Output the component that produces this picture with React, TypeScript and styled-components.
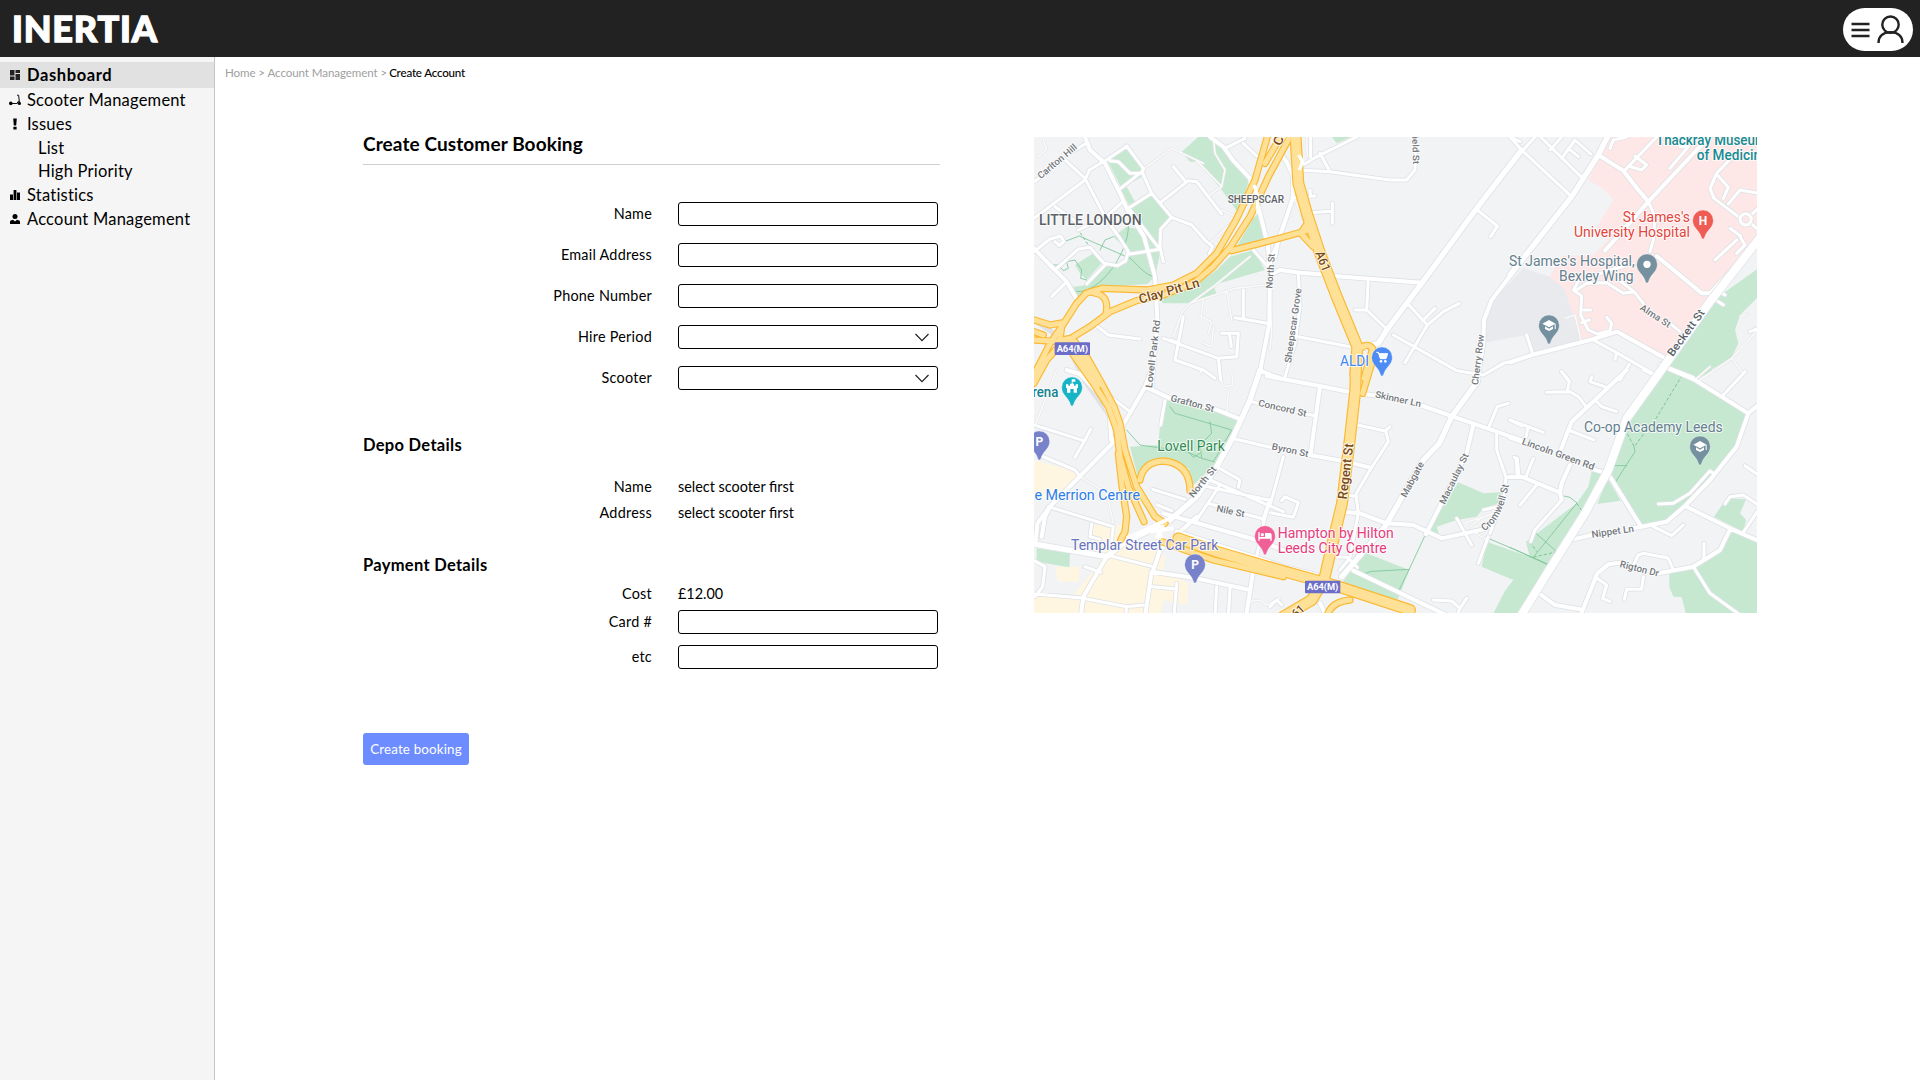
import React from "react";
import styled, { createGlobalStyle } from "styled-components";

const GlobalStyle = createGlobalStyle`
  * { box-sizing: border-box; }
  body { margin: 0; background: #fff; color: #000; font-family: Lato, "Open Sans", sans-serif; }
`;

const Page = styled.div`
  display: flex;
  flex-direction: column;
  height: 1080px;
  overflow: hidden;
`;
const TopBar = styled.header`
  display: flex;
  justify-content: space-between;
  align-items: center;
  flex: 0 0 57px;
  padding: 0 7px 0 12px;
  background: #222;
`;
const Logo = styled.div`
  margin-top: -2px;
  color: #fff;
  font-size: 36px;
  line-height: 40px;
  font-weight: 900;
  letter-spacing: 0.8px;
  -webkit-text-stroke: 1.3px #fff;
`;
const UserPill = styled.button`
  display: flex;
  align-items: center;
  width: 70px;
  height: 43px;
  margin-top: 2px;
  padding: 0;
  border: 0;
  border-radius: 22px;
  background: #fff;
`;
const Body = styled.div`
  display: flex;
  flex: 1;
`;
const Sidebar = styled.nav`
  flex: 0 0 215px;
  padding-top: 5px;
  background: #f5f5f5;
  border-right: 1px solid #c4c4c4;
`;
const NavItem = styled.div<{ $active?: boolean; $height: number; $nested?: boolean }>`
  display: flex;
  align-items: center;
  height: ${(p) => p.$height}px;
  padding: 0 0 1px ${(p) => (p.$nested ? 38 : 9)}px;
  gap: 6px;
  font-size: 16.5px;
  white-space: nowrap;
  letter-spacing: ${(p) => (p.$active ? 0.6 : 0.22)}px;
  font-weight: ${(p) => (p.$active ? 700 : 400)};
  background: ${(p) => (p.$active ? "#e1e1e1" : "transparent")};
`;
const Main = styled.main`
  flex: 1;
`;
const Breadcrumb = styled.div`
  display: flex;
  gap: 2px;
  padding: 8px 0 0 10px;
  font-size: 11.6px;
  line-height: 16px;
  color: #a0a0a0;
  letter-spacing: -0.05px;
`;
const Crumb = styled.span<{ $current?: boolean }>`
  color: ${(p) => (p.$current ? "#000" : "inherit")};
  font-weight: ${(p) => (p.$current ? 500 : 400)};
  letter-spacing: ${(p) => (p.$current ? -0.2 : -0.1)}px;
`;
const Content = styled.div`
  display: flex;
  align-items: flex-start;
  padding: 56px 0 0 148px;
  gap: 94px;
`;
const Form = styled.form`
  width: 577px;
`;
const Title = styled.h1`
  margin: 0 0 37px;
  height: 28px;
  border-bottom: 1px solid #cfcfcf;
  font-size: 19px;
  line-height: 13px;
  font-weight: 700;
  letter-spacing: 0.1px;
`;
const Section = styled.h2<{ $top: number; $bottom: number }>`
  margin: ${(p) => p.$top}px 0 ${(p) => p.$bottom}px;
  font-size: 16.5px;
  line-height: 20px;
  font-weight: 700;
  letter-spacing: 0.3px;
`;
const Fields = styled.div<{ $gap: number }>`
  display: grid;
  gap: ${(p) => p.$gap}px;
`;
const Field = styled.div<{ $height?: number }>`
  display: grid;
  grid-template-columns: 289px 260px;
  column-gap: 26px;
  align-items: center;
  height: ${(p) => p.$height ?? 24}px;
  font-size: 14.4px;
`;
const Label = styled.label`
  padding-bottom: 1px;
  text-align: right;
  white-space: nowrap;
  letter-spacing: 0.25px;
`;
const Value = styled.span`
  padding-bottom: 1px;
`;
const Input = styled.div`
  display: flex;
  align-items: center;
  justify-content: flex-end;
  height: 24px;
  padding-right: 8px;
  border: 1px solid #000;
  border-radius: 3px;
  background: #fff;
`;
const Submit = styled.button`
  display: block;
  width: 106px;
  height: 32px;
  margin-top: 64px;
  padding: 0 0 1px;
  border: 0;
  border-radius: 3px;
  background: #6c8cff;
  color: #fff;
  font: 400 13.4px Lato, sans-serif;
  letter-spacing: 0.15px;
  white-space: nowrap;
`;
const MapView = styled.svg`
  display: block;
  width: 723px;
  height: 476px;
`;

/* ---------- map data: one entry per map tile, each tile spans 720 units ---------- */

type Label = [text: string, x: number, y: number, w: number, size: number, angle: number, fill: string, weight?: number];
interface Tile {
  at: [number, number];
  pink?: string;
  grey?: string;
  cream?: string;
  park?: string;
  path?: string;
  dash?: string;
  thin?: string;
  minor?: string;
  mid?: string;
  wide?: string;
  yellow?: string;
  yellowWide?: string;
  labels: Label[];
}

const ST = "#74787c";
const BROWN = "#7b4a14";
const SLATE = "#64808f";

const tiles: Tile[] = [
  {
    at: [0, 0],
    park:
      "M232 92L295 45L345 118L335 140L275 175ZM272 178L290 170L315 215L365 190L420 262L390 300L385 345L390 370L375 440L352 462L180 475L140 505L130 470L170 465L230 405L290 400L300 365L250 320L290 290L335 300L310 250ZM135 405L190 370L215 400L170 450L150 430ZM455 65L505 21L545 21L600 85L658 150L640 205L620 242L575 180L505 95L480 95ZM670 265L685 250L712 340L615 358ZM600 380L670 360L705 420L550 465L560 492L480 520L400 520L370 500L490 470L560 420ZM905 20L965 20L920 40Z",
    path:
      "M70 405L85 405L100 422L115 415L110 395L135 390L155 420L152 445L170 450M295 290C295 370 210 490 140 485M108 333L148 318L300 385C320 400 340 430 365 438M210 360L225 330L250 320",
    dash: "M115 255L175 345",
    thin:
      "M340 118L425 55L520 100M500 92L575 170L540 195M550 21L555 70L585 120L575 170M540 340L622 262M575 240L620 262M660 380L550 470L480 520L455 550L430 620M480 520L615 475L710 465M590 480L605 570M520 510L513 560L545 575L535 610M550 590L545 650L520 640M22 80L50 60L38 22",
    minor:
      "M12 155L60 122M115 72L165 42M100 85L165 145L230 270L270 325L295 365L287 392L262 407L222 400L180 352L145 357L75 420M12 265L165 150L178 120L225 92L292 48M75 230L145 280M145 300L230 260L278 215M12 365L60 327L92 318L102 335L88 347L75 335M228 402L170 462M105 460L65 500M240 92L265 95L300 130L335 130L340 115L290 48M340 122L272 175M338 130L365 190L425 262M295 235L365 190M425 262L392 298L390 350L400 395M300 240L345 300L385 352M300 372L390 358M395 215L475 152L500 155L575 252M465 152L430 110M425 262L485 285L530 335L548 350L538 370M585 55L645 25M640 40L680 78M670 360L712 408L745 335M190 580L235 615L330 627M400 625L565 685L620 680L625 610L575 610M598 610L604 650M460 560L435 690L520 720L555 745M450 640L420 630M565 685L572 750M640 480L640 568M615 563L712 580M690 720L750 745",
    mid: "M165 21L180 60L225 100L275 200L292 240L342 320L375 440L382 570L365 765M540 21L580 50L610 92L660 145L665 180M12 355L45 390L110 455L142 510M680 210L700 290L712 340L720 400L718 580L690 725",
    yellow:
      "M715 10L675 150L618 270L560 370L500 430L430 465L350 480L215 475L168 490L140 520L95 590L60 640L12 735M780 20L715 140L660 260L602 350L550 410L490 460L400 495L320 512L240 545L180 590L90 645L50 690L12 760M190 488Q240 495 228 550M605 362L710 335L830 302M12 570L60 585L100 578M12 605L40 615M12 630L75 634L120 625M95 590L88 640",
    yellowWide: "M130 640L158 690L200 760",
    labels: [
      ["LITTLE LONDON", 27, 285, 308, 42, 0, "#5c6267", 500],
      ["SHEEPSCAR", 593, 219, 169, 32, 0, "#5c6267", 500],
      ["Carlton Hill", 32, 148, 145, 28, -40, ST],
      ["Clay Pit Ln", 331, 521, 187, 39, -16, BROWN, 500],
      ["North St", 727, 476, 105, 28, -86, ST],
      ["Lovell Park Rd", 366, 775, 205, 28, -83, ST],
    ],
  },
  {
    at: [720, 0],
    thin: "M0 500L5 600L0 660M75 210L105 280M110 21L112 80",
    minor:
      "M90 110L135 83L260 21M150 70L180 125M122 21L122 80M85 120L180 125L360 150L410 150L435 120L437 21M75 203L135 198M120 180L122 200M118 248L187 244M187 220L187 280M85 430L90 530L75 640L45 740M85 620L240 650M295 445L290 540L255 540M290 540L350 597M622 240L682 288L662 320M412 520L472 585M458 572L495 535M568 520L520 545L472 585L405 698M370 615L560 722L640 735L700 700L750 688M720 21L750 35",
    mid: "M30 70L48 92L70 140L68 205L50 260L25 330L15 380M10 430L30 420L90 428L150 433M190 438L455 458M740 412L665 510L642 570L640 640L620 760",
    wide: "M755 60L620 235L455 460L350 600L325 640L285 652",
    yellow: "M-15 100L38 10M265 660Q290 635 308 655L282 745M112 280L92 310L130 350",
    yellowWide: "M76 10L85 160L112 255L150 370L200 500L262 650L256 735",
    labels: [
      ["Cl", 30, 50, 40, 38, -62, BROWN, 500],
      ["A61", 136, 369, 62, 38, 69, BROWN, 500],
      ["field St", 426, 10, 93, 27, 88, ST],
      ["Sheepscar Grove", 63, 700, 226, 28, -82, ST],
      ["Cherry Row", 624, 766, 152, 28, -83, ST],
      ["ALDI", 210, 708, 87, 43, 0, "#4285f4"],
    ],
  },
  {
    at: [1440, 0],
    pink: "M235 150L300 21L745 21L745 335L600 505L465 687L335 605L213 635L165 480L118 440L155 378L250 375L295 330L260 290L310 210L285 180Z",
    grey: "M40 415L120 440L165 480L213 632L75 665L48 615L-85 640L-78 560L-40 500Z",
    park: "M745 415L600 518L465 705L560 745L665 683L685 640L675 600L690 555L745 500Z",
    thin: "M745 598L665 685L570 750M690 560L712 552M665 685L700 730M195 555L213 632M165 565L195 555",
    minor:
      "M0 21L40 65L185 200M35 65L75 21M92 21L218 145M120 60L155 21M155 85L195 30L242 72M175 55L205 80M345 120L440 21M375 78L410 105L395 120L355 108M480 115L535 50L510 50L520 40M300 55L310 30L350 21M670 78L620 130L600 175L612 205L692 265M622 135L655 172L640 205M655 222L690 180L745 190M723 280L745 300M722 255L745 235M690 320L705 345L680 370M660 295L692 318M680 330L615 390M415 215L435 260L430 330L420 365M340 410L300 420L205 455L190 480L215 498L212 555L235 600L262 612L300 602L305 580L290 562M200 480L230 460L290 458L340 490L372 485L400 520M222 540L242 540M215 578L238 570M320 445L372 485M480 580L510 605M50 615L68 672M250 630L320 668L445 740M320 668L315 688M358 703L330 750M155 725L175 750M610 505L640 525M622 480L645 495M720 605L745 595M455 705L550 742",
    mid: "M265 75L340 122L385 180L415 215L560 60L605 15M415 215L285 362M440 378L575 490L600 490L750 330M0 697L65 675L240 630L322 605L470 688",
    wide: "M0 435L185 200L265 75L295 15",
    labels: [
      ["Thackray Museum", 438, 46, 332, 43, 0, "#178b92", 500],
      ["of Medicine", 560, 90, 215, 43, 0, "#178b92", 500],
      ["St James's", 338, 276, 202, 43, 0, "#e3453d"],
      ["University Hospital", 192, 321, 348, 43, 0, "#e3453d"],
      ["St James's Hospital,", -3, 408, 377, 43, 0, SLATE],
      ["Bexley Wing", 147, 453, 224, 43, 0, SLATE],
      ["Alma St", 388, 538, 103, 28, 33, ST],
      ["Beckett St", 488, 682, 165, 33, -54, "#5c6267", 500],
    ],
  },
  {
    at: [0, 720],
    cream: "M12 270L120 300L150 322L80 385L12 390ZM180 465L290 465L300 510L370 530L405 560L400 600L475 640L472 705L400 690L390 740L12 740L12 670L130 675L215 570ZM75 590L150 590L145 635L85 635Z",
    park: "M405 85L625 145L560 280L490 345L475 295L400 265L345 290L322 315L300 230L385 225L390 165ZM20 535L120 550L118 592L20 575Z",
    path: "M290 180L330 225L470 245L515 265L552 275M420 110L435 130L605 180L550 275M540 155L545 190L510 225L515 262M475 245L490 262L510 250",
    thin: "M80 0L18 160M150 320L230 370L250 460M510 0L515 12M565 0L580 50L610 45L605 10M595 60L590 125M660 695L690 690L710 705L750 685",
    minor:
      "M180 0L215 60L300 125M12 165L160 212M182 178L162 215L135 262M35 258L135 300L150 320M405 92L392 165M55 410L250 470L245 512M185 462L180 500L210 508M165 590L212 607M230 555L370 590M12 672L150 683L290 710L340 705M290 710L288 729M12 572L45 590L38 650L15 680M560 290L630 330L625 352M368 358L465 388M380 404L425 422M510 345L715 390M540 330L760 425M540 402L565 408M645 432L700 447M570 345L500 450M690 5L750 22M655 92L690 102M605 205L735 235M365 650L440 657M440 640L432 740M560 650L555 740M600 655L595 740M705 440L680 560",
    mid: "M110 0L150 12L215 80L240 140L243 210M18 510L22 460L60 410L245 222L300 130L345 50L365 0M35 500L45 440L60 410M345 50L420 85M550 115L625 145M400 430L680 510L760 540M720 390L700 450M370 600L390 540L500 440M365 605L345 740M365 605L500 625L660 660M670 600L648 740M230 560L160 680L152 740M440 485L760 590L860 615",
    wide: "M12 522L230 560L280 520L420 450L500 380L560 290L610 200L660 90L690 0",
    yellow:
      "M330 330Q340 275 400 273Q480 280 480 362M265 250L275 340L290 440L285 485L272 510M130 -45L190 40L235 110L260 180L270 260L295 350L342 455M170 -40L215 40L252 110L270 160L285 240L320 350L372 435M375 440L405 460M395 515L550 570L760 620",
    yellowWide: "M445 505L560 545L740 598L920 648L1140 720",
    labels: [
      ["Grafton St", 420, 92, 134, 28, 15, ST],
      ["North St", 490, 385, 112, 28, -51, ST],
      ["Nile St", 558, 424, 86, 28, 12, ST],
      ["Concord St", 683, 107, 148, 28, 13, ST],
      ["Byron St", 724, 238, 112, 28, 12, ST],
      ["Arena", -20, 81, 105, 43, 0, "#12838f", 500],
      ["The Merrion Centre", -36, 389, 366, 43, 0, "#2b7de9"],
      ["Templar Street Car Park", 123, 540, 442, 43, 0, "#6772bf"],
      ["Lovell Park", 382, 242, 202, 43, 0, "#2f8b52"],
    ],
  },
  {
    at: [720, 720],
    park: "M565 337L640 370L695 367L690 400L640 415L620 440L560 450L500 470L512 512L472 492L505 430ZM285 548L418 600L380 697L215 640ZM650 515L720 540L835 580L755 740L665 740L705 662L730 630L635 590Z",
    path: "M468 490L418 597L385 665M278 612L305 604L418 598M655 505L760 550L840 585",
    thin: "M580 460L690 425M600 470L640 440M610 485L650 510",
    minor:
      "M108 132L135 137M40 260L2 400M0 428L70 442L85 398L45 380L35 392M262 165L345 183L360 170M347 183L355 215L300 300L258 372L265 430L240 560M235 375L260 380M190 560L232 562L262 592M235 570L210 600M680 190L680 240L708 322L750 322M742 320L738 265M655 175L682 110L715 100M720 150L755 168M560 445L605 525M640 420L690 408M655 500L625 580M490 690L545 693L570 715L590 685M570 715L560 740M708 322L702 380L660 490M0 710L20 690L35 705",
    mid: "M-10 18L150 48L250 68L312 76M450 105L550 140L680 185L760 213M150 50L122 250M120 255L215 272L302 293M610 165L590 250L468 492M215 425L270 430L350 460L430 465L515 505L640 478M250 602L560 750M150 700L170 740",
    wide: "M622 35L545 140L508 220L460 270L345 470L215 620",
    yellow: "M305 -20L278 70M172 735Q185 695 240 690",
    yellowWide: "M258 -20L256 60L238 220L216 400L190 510L162 630L125 690L40 740",
    labels: [
      ["Skinner Ln", 314, 82, 140, 28, 12, ST],
      ["Regent St", 230, 389, 168, 39, -83, BROWN, 500],
      ["Mabgate", 408, 384, 116, 28, -62, ST],
      ["Macaulay St", 524, 405, 166, 28, -64, ST],
      ["A61", 62, 760, 60, 36, -42, BROWN, 500],
      ["Hampton by Hilton", 23, 504, 348, 43, 0, "#e83b7d"],
      ["Leeds City Centre", 23, 549, 327, 43, 0, "#e83b7d"],
    ],
  },
  {
    at: [1440, 720],
    park: "M460 -15L555 30L715 130L680 230L600 330L525 410L470 455L395 467L300 320L350 140ZM262 402L332 392L292 325ZM470 0L610 0L565 25ZM245 305L285 310L220 430L120 585L60 565L48 515L200 400L235 350ZM612 440L650 385L708 388L690 430L708 450L700 485ZM660 485L745 515L745 740L530 740L515 682L490 680L478 650L478 610L550 590L630 540Z",
    path: "M315 338L375 245L372 230M310 287L350 287M0 532L115 585M200 400L70 562M78 490L142 547M162 378L180 382L200 398",
    dash: "M517 15L435 150M410 180L373 230L345 180M142 545L68 562M200 400L220 428M60 515L80 545",
    thin: "M470 560L400 552M560 25L600 -10",
    minor:
      "M635 80L705 5M255 620L290 645L278 685L300 695M372 582L385 555L400 550L475 565L490 600M582 570L582 520M550 590L600 670L690 735M400 620L395 657L350 658L343 688M430 470L485 497L520 465M445 402L490 400L540 370L600 303L610 310M645 402L660 380L700 375L745 405M705 287L745 315M700 487L745 420M80 345L30 405M27 320L22 265L12 262M48 320L70 265M0 150L100 187M55 170L48 200M175 180L252 210M255 90L275 110L320 125M230 112L205 80L180 65L110 67M172 62L178 35L155 5M245 20L240 35L290 52M400 0L430 15M155 390L75 480L62 515",
    mid: "M450 -15L555 30L635 80L715 130L745 105M350 0L255 90L185 155L150 245M180 285L155 340L150 370L155 390M0 320L35 320L150 368M0 203L35 215M250 298L290 310M715 130L680 230L600 330L525 408L470 455L395 470L365 475M190 508L245 495M300 320L390 465M525 408L660 475L745 512M660 478L630 540L550 590L445 610M330 578L295 583L262 610L210 740M80 665L135 705L210 718",
    wide: "",
    labels: [
      ["Lincoln Green Rd", 34, 222, 229, 29, 20, ST],
      ["Co-op Academy Leeds", 222, 186, 416, 43, 0, SLATE],
      ["Nippet Ln", 246, 503, 128, 29, -8, ST],
      ["Rigton Dr", 328, 591, 120, 29, 14, ST],
    ],
  },
];

function Layer({ pick, render }: { pick: (t: Tile) => string | undefined; render: (d: string) => React.ReactNode }) {
  return (
    <>
      {tiles.map((t, i) => {
        const d = pick(t);
        return d ? (
          <g key={i} transform={`translate(${t.at[0]} ${t.at[1]})`}>
            {render(d)}
          </g>
        ) : null;
      })}
    </>
  );
}

const stroke = (color: string, width: number) => (d: string) => (
  <path d={d} fill="none" stroke={color} strokeWidth={width} strokeLinecap="round" strokeLinejoin="round" />
);
const fill = (color: string) => (d: string) => <path d={d} fill={color} />;

function Pin({ x, y, color, children }: { x: number; y: number; color: string; children: React.ReactNode }) {
  return (
    <g transform={`translate(${x} ${y})`}>
      <path d="M0 56C-5 56-5 48-9 41C-15 29-31 20-31 0A31 31 0 0 1 31 0C31 20 15 29 9 41C5 48 5 56 0 56Z" fill={color} stroke="#fff" strokeOpacity=".5" strokeWidth="2" />
      {children}
    </g>
  );
}

function PinLetter({ children }: { children: string }) {
  return (
    <text y="13" textAnchor="middle" fontSize="36" fontWeight="700" fill="#fff">
      {children}
    </text>
  );
}

const Cap = () => (
  <g fill="#fff">
    <path d="M0-16L-20-5L0 6L20-5Z" />
    <path d="M-12 3L0 10L12 3V11L0 17L-12 11Z" />
    <path d="M17-4H20V11H17Z" />
  </g>
);

function Shield({ x, y }: { x: number; y: number }) {
  return (
    <g transform={`translate(${x} ${y})`}>
      <rect width="106" height="38" rx="3" fill="#6c6dc8" />
      <text x="6" y="29" fontSize="28" fontWeight="700" fill="#fff" textLength="94">
        A64(M)
      </text>
    </g>
  );
}

function CityMap() {
  return (
    <MapView viewBox="12 21 2169 1428" preserveAspectRatio="none" fontFamily="Roboto, sans-serif">
      <rect x="0" y="0" width="2200" height="1460" fill="#f1f3f5" />
      <Layer pick={(t) => t.pink} render={fill("#fde8e7")} />
      <Layer pick={(t) => t.grey} render={fill("#e8eaed")} />
      <Layer pick={(t) => t.cream} render={fill("#fef6e1")} />
      <Layer pick={(t) => t.park} render={fill("#c6e8d1")} />
      <path d="M0 570L100 640L160 760L260 900L200 780L130 660L60 590L12 560Z" fill="#dfe1e4" />
      <Layer pick={(t) => t.path} render={stroke("#7cc596", 2.5)} />
      <Layer
        pick={(t) => t.dash}
        render={(d) => <path d={d} fill="none" stroke="#7cc596" strokeWidth="3" strokeDasharray="10 6" />}
      />
      <Layer pick={(t) => t.thin} render={stroke("#e3e4e3", 8)} />
      <Layer pick={(t) => t.minor} render={stroke("#dfe2e6", 14)} />
      <Layer pick={(t) => t.mid} render={stroke("#dfe2e6", 17)} />
      <Layer pick={(t) => t.wide} render={stroke("#dfe2e6", 21)} />
      <Layer pick={(t) => t.thin} render={stroke("#fafafa", 5)} />
      <Layer pick={(t) => t.minor} render={stroke("#fff", 9)} />
      <Layer pick={(t) => t.mid} render={stroke("#fff", 12)} />
      <Layer pick={(t) => t.wide} render={stroke("#fff", 16)} />
      <path d="M2200 310L2040 515L1880 740L1790 865L1735 1020L1665 1150L1570 1300L1465 1470" fill="none" stroke="#e2e5e8" strokeWidth="29" />
      <path d="M2200 310L2040 515L1880 740L1790 865L1735 1020L1665 1150L1570 1300L1465 1470" fill="none" stroke="#fff" strokeWidth="24" />
      <g transform="translate(2147 268)" fill="none">
        <circle r="17" stroke="#dfe2e6" strokeWidth="14" />
        <circle r="17" stroke="#fff" strokeWidth="9" />
      </g>
      <Layer pick={(t) => t.yellow} render={stroke("#fbb933", 22)} />
      <Layer pick={(t) => t.yellowWide} render={stroke("#fbb933", 36)} />
      <Layer pick={(t) => t.yellow} render={stroke("#fee196", 15)} />
      <Layer pick={(t) => t.yellowWide} render={stroke("#fee196", 29)} />
      <path d="M290 1225L420 1165M360 1205L430 1195M385 1200L395 1225M400 1185L380 1225" stroke="#fff" strokeWidth="11" fill="none" />
      <path d="M672 165L682 195L684 250M806 75L818 95L808 120M715 350L718 420" stroke="#fff" strokeWidth="10" fill="none" />

      {tiles.map((t, i) => (
        <g key={i} transform={`translate(${t.at[0]} ${t.at[1]})`}>
          {t.labels.map(([text, x, y, w, size, angle, color, weight]) => (
            <text
              key={text + x}
              transform={`translate(${x} ${y}) rotate(${angle})`}
              fontSize={size}
              fontWeight={weight ?? (size < 35 ? 500 : 400)}
              textLength={w}
              lengthAdjust="spacingAndGlyphs"
              fill={color}
              stroke="#fff"
              strokeOpacity=".8"
              strokeWidth="6"
              strokeLinejoin="round"
              paintOrder="stroke"
            >
              {text}
            </text>
          ))}
        </g>
      ))}
      <path id="cromwell" d="M1362 1203Q1416 1176 1438 1058" fill="none" />
      <text fontSize="30" fontWeight="500" fill={ST} stroke="#fff" strokeOpacity=".8" strokeWidth="6" paintOrder="stroke">
        <textPath href="#cromwell">Cromwell St</textPath>
      </text>
      <Shield x={74} y={637} />
      <Shield x={825} y={1352} />

      <Pin x={1056} y={682} color="#4e8cf5">
        <path d="M-17-15H-11L-5 4H12L17-11H-9" fill="#fff" stroke="#fff" strokeWidth="3" />
        <circle cx="-3" cy="12" r="4" fill="#fff" />
        <circle cx="10" cy="12" r="4" fill="#fff" />
      </Pin>
      <Pin x={2019} y={271} color="#ef5c53">
        <PinLetter>H</PinLetter>
      </Pin>
      <Pin x={1851} y={403} color="#75909e">
        <circle r="11" fill="#fff" />
      </Pin>
      <Pin x={1557} y={586} color="#75909e">
        <Cap />
      </Pin>
      <Pin x={2010} y={949} color="#75909e">
        <Cap />
      </Pin>
      <Pin x={126} y={772} color="#17b3c6">
        <path d="M-18-9H-11V-5H-6V-11H-1V-24H10V-17H2V-11H6V-5H11V-9H18V2H15V16H5V5H-5V16H-15V2H-18Z" fill="#fff" />
      </Pin>
      <Pin x={28} y={934} color="#7782cb">
        <PinLetter>P</PinLetter>
      </Pin>
      <Pin x={495} y={1303} color="#7782cb">
        <PinLetter>P</PinLetter>
      </Pin>
      <Pin x={705} y={1218} color="#f06096">
        <path d="M-20-12H-16V3H0V-9H15Q20-9 20-3V14H16V8H-16V14H-20Z" fill="#fff" />
        <circle cx="-8" cy="-4" r="5" fill="#fff" />
      </Pin>
    </MapView>
  );
}

/* ---------- icons ---------- */

const NavIcon = ({ children }: { children: React.ReactNode }) => (
  <svg width="12" height="12" viewBox="0 0 12 12" fill="#000">
    {children}
  </svg>
);
const DashboardIcon = () => (
  <NavIcon>
    <path d="M1 1H5.5V6.5H1ZM6.5 1H11V4H6.5ZM1 7.5H5.5V11H1ZM6.5 5H11V11H6.5Z" fill="#222" />
  </NavIcon>
);
const ScooterIcon = () => (
  <NavIcon>
    <path d="M8 1.2H9.6L10.6 9.5M2 9.5H8.2Q8.3 7.6 10 7" fill="none" stroke="#111" strokeWidth="1" />
    <circle cx="1.8" cy="9.4" r="1.8" />
    <circle cx="10.4" cy="9.4" r="1.6" />
  </NavIcon>
);
const AlertIcon = () => (
  <NavIcon>
    <path d="M4.2 0.5H7.8L7.2 7.4H4.8ZM4.4 8.8H7.6V11.6H4.4Z" />
  </NavIcon>
);
const StatsIcon = () => (
  <NavIcon>
    <path d="M1 5.5H4V11H1ZM4.6 1H7.4V11H4.6ZM8 3.5H11V11H8Z" />
  </NavIcon>
);
const PersonIcon = () => (
  <NavIcon>
    <circle cx="6" cy="3.4" r="2.5" />
    <path d="M1 11V8.6Q1 7.2 4 6.8L6 8.4L8 6.8Q11 7.2 11 8.6V11Z" />
  </NavIcon>
);
const Chevron = () => (
  <svg width="14" height="9" viewBox="0 0 14 9" fill="none" stroke="#222" strokeWidth="1.2">
    <path d="M0.5 1L7 7.7L13.5 1" />
  </svg>
);
const MenuUserIcon = () => (
  <svg width="70" height="43" viewBox="0 0 70 43" fill="none" stroke="#222">
    <path d="M8.5 16H26.5M8.5 22H26.5M8.5 28H26.5" strokeWidth="2.4" />
    <circle cx="47.5" cy="16.7" r="8.2" strokeWidth="2.4" />
    <path d="M35.5 35C35.5 28 40.5 24.3 47.5 24.3S59.5 28 59.5 35" strokeWidth="2.4" />
  </svg>
);

export default function App() {
  return (
    <Page>
      <GlobalStyle />
      <TopBar>
        <Logo>INERTIA</Logo>
        <UserPill aria-label="Account menu">
          <MenuUserIcon />
        </UserPill>
      </TopBar>
      <Body>
        <Sidebar>
          <NavItem $active $height={26}><DashboardIcon />Dashboard</NavItem>
          <NavItem $height={24}><ScooterIcon />Scooter Management</NavItem>
          <NavItem $height={25}><AlertIcon />Issues</NavItem>
          <NavItem $nested $height={22}>List</NavItem>
          <NavItem $nested $height={24}>High Priority</NavItem>
          <NavItem $height={25}><StatsIcon />Statistics</NavItem>
          <NavItem $height={22}><PersonIcon />Account Management</NavItem>
        </Sidebar>
        <Main>
          <Breadcrumb>
            <Crumb>Home &gt; Account Management &gt;</Crumb>
            <Crumb $current>Create Account</Crumb>
          </Breadcrumb>
          <Content>
            <Form>
              <Title>Create Customer Booking</Title>
              <Fields $gap={17}>
                <Field><Label>Name</Label><Input /></Field>
                <Field><Label>Email Address</Label><Input /></Field>
                <Field><Label>Phone Number</Label><Input /></Field>
                <Field><Label>Hire Period</Label><Input><Chevron /></Input></Field>
                <Field><Label>Scooter</Label><Input><Chevron /></Input></Field>
              </Fields>
              <Section $top={45} $bottom={20}>Depo Details</Section>
              <Fields $gap={2}>
                <Field><Label>Name</Label><Value>select scooter first</Value></Field>
                <Field><Label>Address</Label><Value>select scooter first</Value></Field>
              </Fields>
              <Section $top={30} $bottom={10}>Payment Details</Section>
              <Fields $gap={11}>
                <Field $height={14}><Label>Cost</Label><Value>£12.00</Value></Field>
                <Field><Label>Card #</Label><Input /></Field>
                <Field><Label>etc</Label><Input /></Field>
              </Fields>
              <Submit type="button">Create booking</Submit>
            </Form>
            <CityMap />
          </Content>
        </Main>
      </Body>
    </Page>
  );
}
